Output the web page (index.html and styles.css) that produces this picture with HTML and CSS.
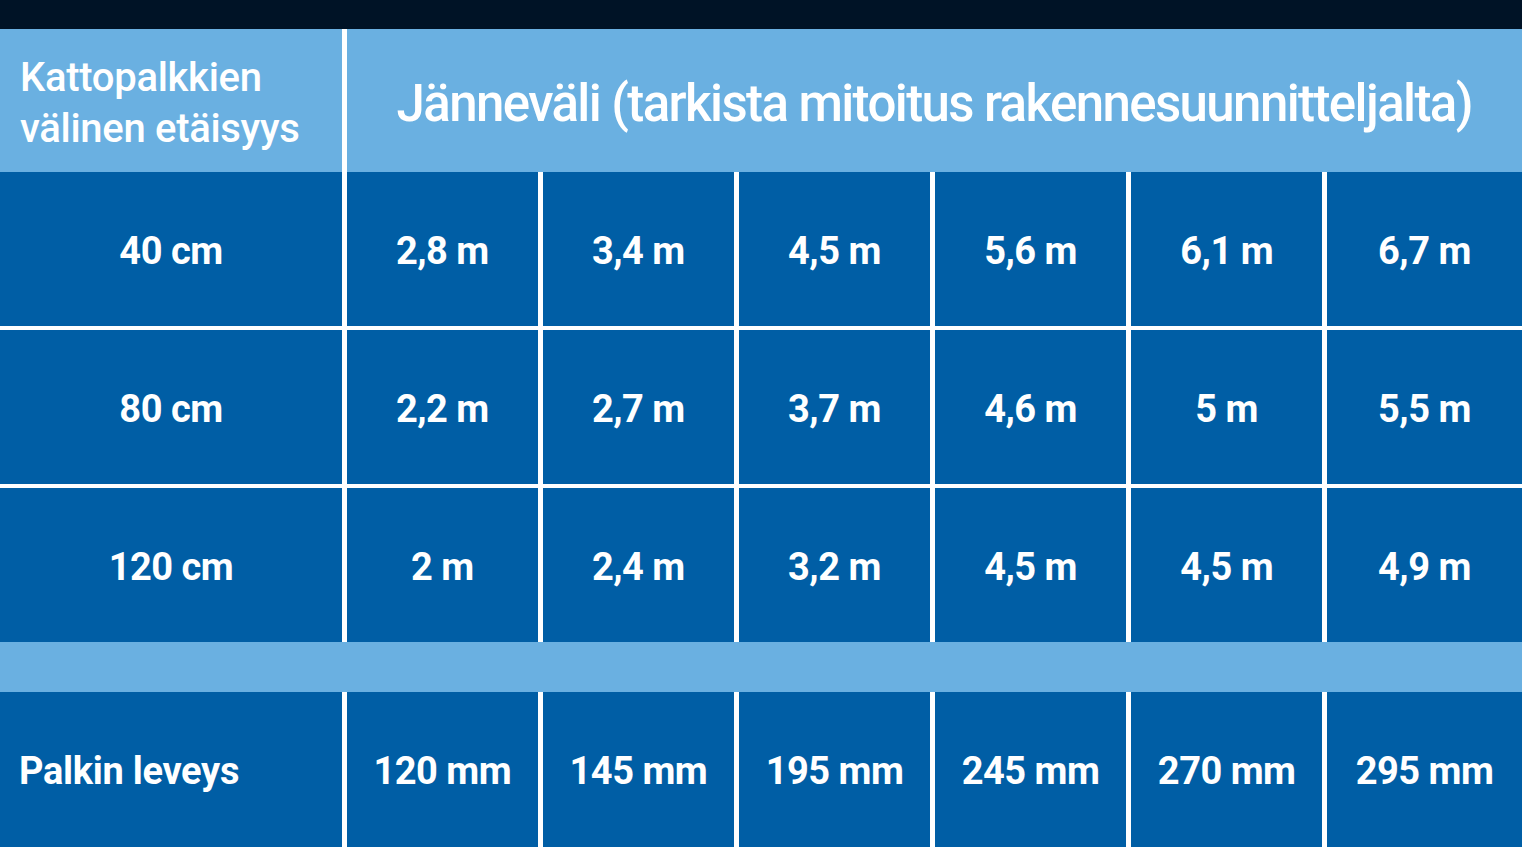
FILE: index.html
```html
<!DOCTYPE html>
<html lang="fi">
<head>
<meta charset="utf-8">
<title>Kattopalkit</title>
<link rel="stylesheet" href="styles.css">
</head>
<body>
<div class="topbar"></div>
<div class="table">
  <div class="row head">
    <div class="cell head-left">Kattopalkkien<br>välinen etäisyys</div>
    <div class="cell head-right">Jänneväli (tarkista mitoitus rakennesuunnitteljalta)</div>
  </div>
  <div class="row data">
    <div class="cell">40 cm</div>
    <div class="cell">2,8 m</div>
    <div class="cell">3,4 m</div>
    <div class="cell">4,5 m</div>
    <div class="cell">5,6 m</div>
    <div class="cell">6,1 m</div>
    <div class="cell">6,7 m</div>
  </div>
  <div class="row data">
    <div class="cell">80 cm</div>
    <div class="cell">2,2 m</div>
    <div class="cell">2,7 m</div>
    <div class="cell">3,7 m</div>
    <div class="cell">4,6 m</div>
    <div class="cell">5 m</div>
    <div class="cell">5,5 m</div>
  </div>
  <div class="row data">
    <div class="cell">120 cm</div>
    <div class="cell">2 m</div>
    <div class="cell">2,4 m</div>
    <div class="cell">3,2 m</div>
    <div class="cell">4,5 m</div>
    <div class="cell">4,5 m</div>
    <div class="cell">4,9 m</div>
  </div>
  <div class="band"></div>
  <div class="row data last">
    <div class="cell label">Palkin leveys</div>
    <div class="cell">120 mm</div>
    <div class="cell">145 mm</div>
    <div class="cell">195 mm</div>
    <div class="cell">245 mm</div>
    <div class="cell">270 mm</div>
    <div class="cell">295 mm</div>
  </div>
</div>
</body>
</html>
```
FILE: styles.css
```css
html, body {
  margin: 0;
  padding: 0;
  background: #ffffff;
}
body {
  width: 1522px;
  height: 847px;
  overflow: hidden;
  font-family: Roboto, "Liberation Sans", sans-serif;
  color: #ffffff;
}
.topbar {
  height: 29px;
  background: #001326;
}
.table {
  display: flex;
  flex-direction: column;
  background: #ffffff;
}
.row {
  display: grid;
  grid-template-columns: 342px repeat(5, 191.6px) 1fr;
  column-gap: 4.5px;
}
.row.head {
  grid-template-columns: 342px 1fr;
  height: 143px;
}
.row.data {
  height: 153.5px;
}
.row.data + .row.data {
  margin-top: 4.5px;
}
.row.last {
  height: 157px;
}
.cell {
  background: #005ea5;
  display: flex;
  align-items: center;
  justify-content: center;
  font-weight: 700;
  font-size: 38px;
  letter-spacing: -0.5px;
  padding-top: 4px;
  box-sizing: border-box;
}
.head .cell {
  background: #6ab0e1;
}
.cell.head-left {
  justify-content: flex-start;
  padding-left: 20px;
  font-weight: 500;
  font-size: 40px;
  line-height: 51px;
  letter-spacing: -0.3px;
  padding-top: 4px;
}
.cell.head-right {
  font-weight: 500;
  font-size: 51px;
  letter-spacing: -1.6px;
  padding-top: 6px;
}
.cell.label {
  justify-content: flex-start;
  padding-left: 19px;
  padding-top: 2px;
  letter-spacing: -0.3px;
}
.last .cell {
  padding-top: 2px;
}
.band {
  height: 50px;
  background: #6ab0e1;
}
```
